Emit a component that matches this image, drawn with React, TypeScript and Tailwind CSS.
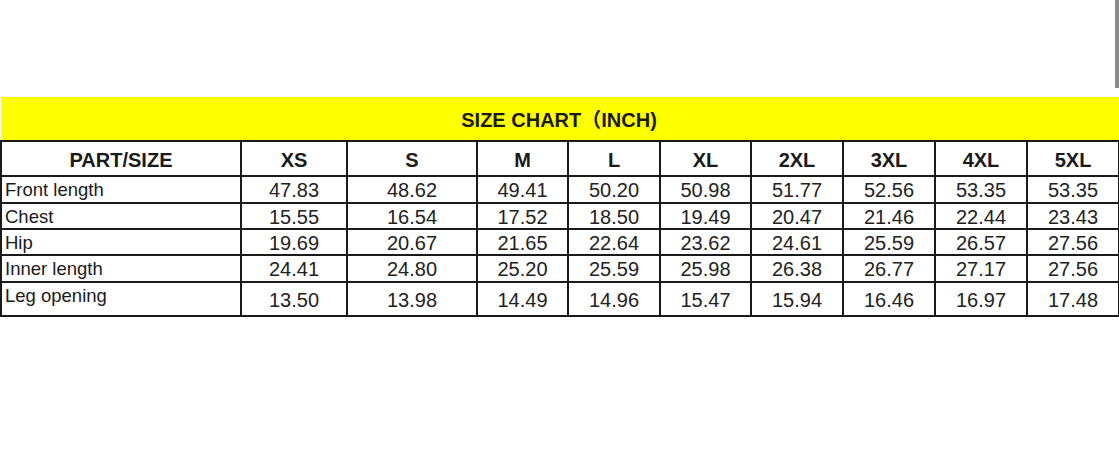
import React from 'react'

const sizes = ['XS', 'S', 'M', 'L', 'XL', '2XL', '3XL', '4XL', '5XL']
const widths = [240, 106, 130, 91, 92, 91, 92, 92, 92, 92]

const rows: { label: string; values: string[]; h: number }[] = [
  { label: 'Front length', values: ['47.83', '48.62', '49.41', '50.20', '50.98', '51.77', '52.56', '53.35', '53.35'], h: 27 },
  { label: 'Chest', values: ['15.55', '16.54', '17.52', '18.50', '19.49', '20.47', '21.46', '22.44', '23.43'], h: 26 },
  { label: 'Hip', values: ['19.69', '20.67', '21.65', '22.64', '23.62', '24.61', '25.59', '26.57', '27.56'], h: 26 },
  { label: 'Inner length', values: ['24.41', '24.80', '25.20', '25.59', '25.98', '26.38', '26.77', '27.17', '27.56'], h: 27 },
  { label: 'Leg opening', values: ['13.50', '13.98', '14.49', '14.96', '15.47', '15.94', '16.46', '16.97', '17.48'], h: 34 },
]

export default function App() {
  return (
    <div className="relative w-[1119px] h-[458px] bg-white overflow-hidden text-[#1a1a1a]"
      style={{ fontFamily: '"Liberation Sans", Arial, "Noto Sans CJK SC", sans-serif' }}>
      {/* scroll indicator */}
      <div className="absolute right-0 top-0 w-[4px] h-[88px] bg-[#8a8a8a]" />

      <div className="pt-[97px]">
        <table className="w-[1118px] border-collapse table-fixed">
          <colgroup>
            {widths.map((w, i) => <col key={i} style={{ width: w }} />)}
          </colgroup>
          <thead>
            <tr className="h-[44px] bg-[#ffff00]">
              <th colSpan={10} className="border-b-2 border-[#1a1a1a] text-[20px] leading-[24px] font-bold pt-[2px] pr-[2px]">
                SIZE CHART（INCH)
              </th>
            </tr>
            <tr className="h-[35px]">
              <th className="border-2 border-[#1a1a1a] text-[20px] leading-[24px] font-bold pt-[3px]">PART/SIZE</th>
              {sizes.map(s => (
                <th key={s} className="border-2 border-[#1a1a1a] text-[20px] leading-[24px] font-bold pt-[3px]">{s}</th>
              ))}
            </tr>
          </thead>
          <tbody>
            {rows.map(r => (
              <tr key={r.label} style={{ height: r.h }}>
                <td className="border-2 border-[#1a1a1a] text-[18.5px] text-left pl-[3px] align-top pt-[2px] leading-[22px]">{r.label}</td>
                {r.values.map((v, i) => (
                  <td key={i} className="border-2 border-[#1a1a1a] text-[20px] text-center align-middle leading-[22px] pt-[1px] text-[#222]">{v}</td>
                ))}
              </tr>
            ))}
          </tbody>
        </table>
      </div>
    </div>
  )
}
